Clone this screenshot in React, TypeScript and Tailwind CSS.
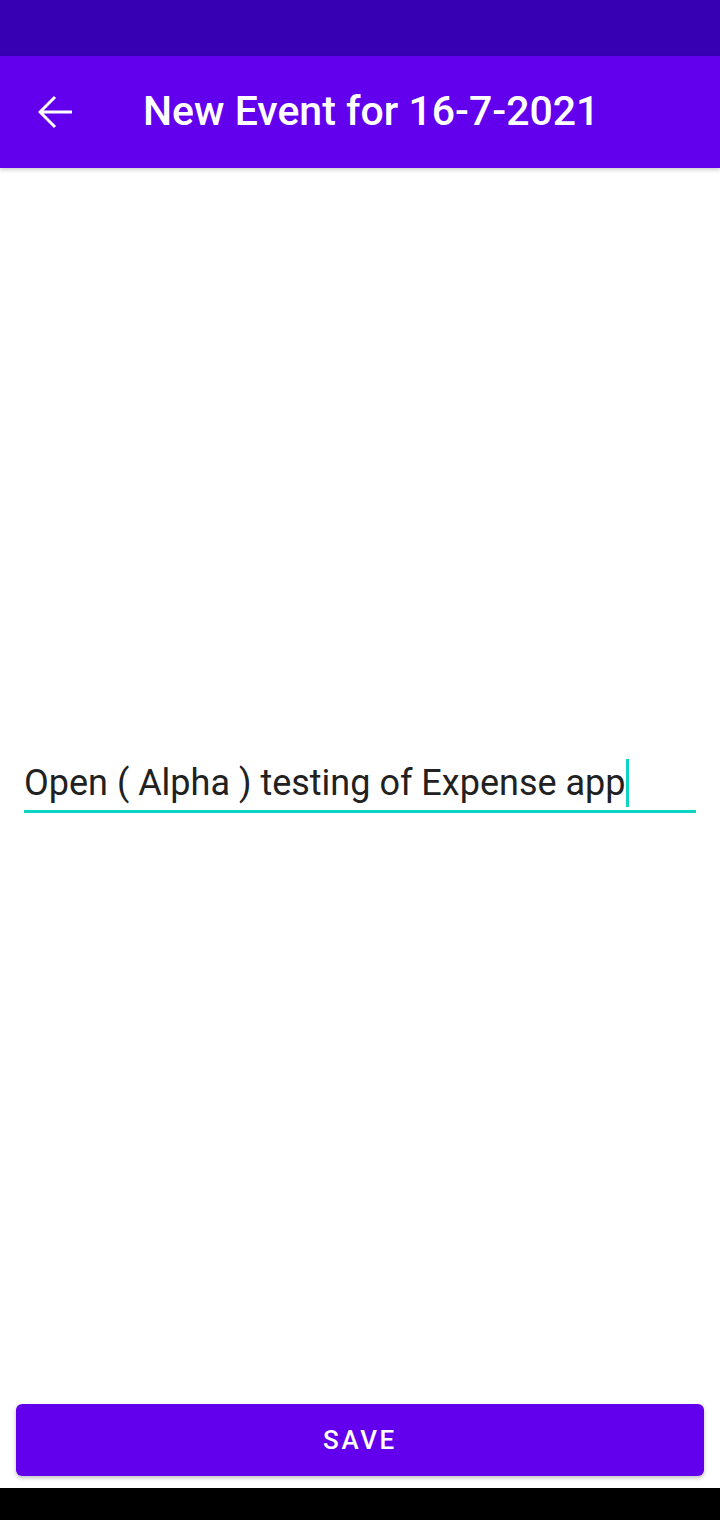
export default function App() {
  return (
    <div className="flex h-[1520px] w-[720px] flex-col bg-white font-['Roboto',sans-serif]">
      <div className="h-14 shrink-0 bg-[#3700B3]" />

      <header className="relative z-10 flex h-28 shrink-0 items-center bg-[#6200EE] shadow-[0_2px_4px_rgba(0,0,0,0.2)]">
        <button className="ml-[38px] flex h-9 w-9 items-center justify-center">
          <svg width="36" height="34" viewBox="0 0 36 34" fill="none">
            <path d="M3 17H34M17 2L2 17L17 32" stroke="white" strokeWidth="3" />
          </svg>
        </button>
        <h1 className="ml-[69px] text-[41px] font-medium text-white">New Event for 16-7-2021</h1>
      </header>

      <main className="flex flex-1 items-center px-6">
        <div className="w-full border-b-[3px] border-[#0DD3C5] pb-[3px]">
          <div className="flex h-12 items-center text-[36px] leading-[44px] text-[#212121]">
            <span>Open ( Alpha ) testing of Expense app</span>
            <span className="h-12 w-[3px] bg-[#0DD3C5]" />
          </div>
        </div>
      </main>

      <div className="shrink-0 px-4 pb-3">
        <button className="flex h-[72px] w-full items-center justify-center rounded-md bg-[#6200EE] text-[26px] font-medium tracking-[0.1em] text-white shadow-[0_2px_4px_rgba(0,0,0,0.25)]">
          SAVE
        </button>
      </div>

      <div className="h-8 shrink-0 bg-black" />
    </div>
  )
}
